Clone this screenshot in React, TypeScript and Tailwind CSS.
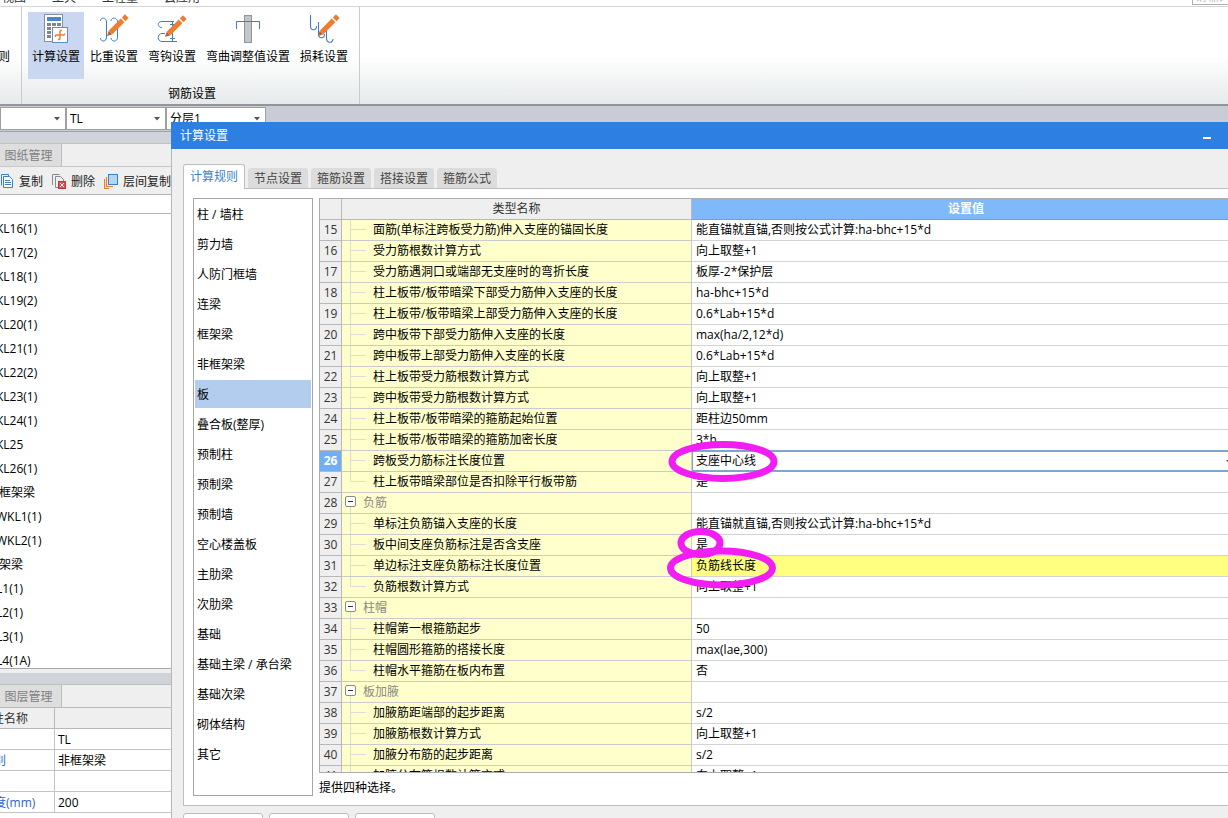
import React from "react";

const menus = ["视图", "工具", "工程量", "云应用"];

function Pencil({ x, y }: { x: number; y: number }) {
  return (
    <g transform={`translate(${x} ${y}) rotate(-45)`}>
      <path d="M0 0 L5 -2.6 V2.6 Z" fill="#b9622b" />
      <rect x="5" y="-2.6" width="17" height="5.2" fill="#ed7d31" />
      <rect x="23.5" y="-2.6" width="4.5" height="5.2" fill="#ed7d31" />
    </g>
  );
}

function CalcIcon() {
  return (
    <svg width="32" height="32" viewBox="0 0 32 32" aria-hidden="true">
      <rect x="4.5" y="1.5" width="18" height="27" fill="#fff" stroke="#8a9099" />
      <rect x="7" y="4" width="14" height="4" fill="#4a86c8" />
      {[10, 14, 18, 22].map((y) =>
        [7, 12, 17].map((x) => <rect key={`${x}-${y}`} x={x} y={y} width="4" height="3" fill="#7f868e" />)
      )}
      <rect x="12.5" y="14.5" width="15" height="15" fill="#fff" stroke="#5b8fc9" />
      <path
        d="M20 17.500V26.500M15.500 22H24.500M20 17.500H22M18 26.500H20M15.500 22V24M24.500 20.500V22"
        fill="none"
        stroke="#ed7d31"
        strokeWidth="1.4"
      />
    </svg>
  );
}

function WeightIcon() {
  return (
    <svg width="32" height="32" viewBox="0 0 32 32" aria-hidden="true">
      <g fill="none" stroke="#3f7fc1">
        <path d="M2.5 8C2.5 4 8.5 4 8.5 9V24C8.500 29.500 2.500 29 2.500 25" />
        <path d="M13 8C13 4 19.500 4 19.500 9V24C19.500 29.500 13 29 13 25" />
      </g>
      <Pencil x={9} y={23} />
    </svg>
  );
}

function HookIcon() {
  return (
    <svg width="32" height="32" viewBox="0 0 32 32" aria-hidden="true">
      <g fill="none" stroke="#3f7fc1">
        <path d="M6 14.500C1 14.500 1 8.500 6 8.500H18" />
        <path d="M9 20.500H6C1 20.500 1 28.500 6 28.500H21" />
        <path d="M16.500 8.500V28.500M14 11.500H19M14 25.500H19" />
      </g>
      <Pencil x={9} y={24} />
    </svg>
  );
}

function BendIcon() {
  return (
    <svg width="32" height="32" viewBox="0 0 32 32" aria-hidden="true">
      <rect x="12.5" y="2.5" width="7" height="27" fill="#c3c7cb" stroke="#8f9499" />
      <path d="M4.500 16V8.500H27.500V16" fill="none" stroke="#3f7fc1" />
    </svg>
  );
}

function LossIcon() {
  return (
    <svg width="32" height="32" viewBox="0 0 32 32" aria-hidden="true">
      <g fill="none" stroke="#3f7fc1" strokeWidth="1.100">
        <path d="M2.500 2V13C2.500 18 8.500 18 8.500 13" />
        <path d="M10.500 9V21C10.500 26 16.500 26 16.500 21" />
        <path d="M18.500 17V25C18.500 30.500 25 30.500 25 26" />
      </g>
      <Pencil x={10} y={23} />
    </svg>
  );
}

const ribbon = [
  { label: "计算设置", Icon: CalcIcon, active: true },
  { label: "比重设置", Icon: WeightIcon },
  { label: "弯钩设置", Icon: HookIcon },
  { label: "弯曲调整值设置", Icon: BendIcon },
  { label: "损耗设置", Icon: LossIcon },
];

function Combo({ label, value, className }: { label: string; value: string; className: string }) {
  return (
    <div className={`relative h-[23px] shrink-0 border border-[#a0a0a0] bg-white ${className}`}>
      <select
        aria-label={label}
        defaultValue={value}
        className="block h-full w-full appearance-none bg-transparent pl-[3px] text-black outline-none"
      >
        <option>{value}</option>
      </select>
      <svg className="pointer-events-none absolute top-[9px] right-[5px]" width="6" height="4" viewBox="0 0 6 4">
        <path d="M0 0H6L3 3.500Z" fill="#555" />
      </svg>
    </div>
  );
}

function CopyIcon() {
  return (
    <svg width="14" height="15" viewBox="0 0 14 15" fill="#fff" stroke="#3f7fc1" aria-hidden="true">
      <path d="M1.500 11.500V0.500H8.500V3" fill="none" />
      <path d="M3.500 2.500H9.500L12.500 5.500V13.500H3.500Z" />
      <path d="M5 6.500H10M5 8.500H11M5 10.500H11" />
    </svg>
  );
}

function DeleteIcon() {
  return (
    <svg width="15" height="15" viewBox="0 0 15 15" fill="none" stroke="#858b91" aria-hidden="true">
      <path d="M0.500 11V0.500H7.500M3.500 13.500V2.500H8.500L11.500 5.500V7M3.500 13.500H6" />
      <rect x="6.500" y="7.500" width="7" height="7" fill="#d9534f" stroke="#c23b3b" />
      <path d="M8 9L12 13M12 9L8 13" stroke="#fff" />
    </svg>
  );
}

function FloorCopyIcon() {
  return (
    <svg width="15" height="15" viewBox="0 0 15 15" fill="none" aria-hidden="true">
      <path d="M0.500 5V14.500H5M2.500 3V12.500H9" stroke="#ed7d31" strokeWidth="1.200" />
      <rect x="4.500" y="0.500" width="9" height="10" fill="#b4d5fb" stroke="#3f7fc1" />
    </svg>
  );
}

const components = [
  "KL16(1)", "KL17(2)", "KL18(1)", "KL19(2)", "KL20(1)", "KL21(1)", "KL22(2)", "KL23(1)", "KL24(1)", "KL25",
  "KL26(1)", "框架梁", "WKL1(1)", "WKL2(1)", "架梁", "L1(1)", "L2(1)", "L3(1)", "L4(1A)",
];
const componentInset: Record<string, string> = {
  框架梁: "-ml-px",
  架梁: "-ml-px",
  "L1(1)": "-ml-1",
  "L2(1)": "-ml-1",
  "L3(1)": "-ml-1",
  "L4(1A)": "-ml-1",
};

const categories = [
  "柱 / 墙柱", "剪力墙", "人防门框墙", "连梁", "框架梁", "非框架梁", "板", "叠合板(整厚)", "预制柱", "预制梁",
  "预制墙", "空心楼盖板", "主肋梁", "次肋梁", "基础", "基础主梁 / 承台梁", "基础次梁", "砌体结构", "其它",
];

type Row = { n: number; name: string; value: string; kind?: "group" | "last" };
const rows: Row[] = [
  { n: 15, name: "面筋(单标注跨板受力筋)伸入支座的锚固长度", value: "能直锚就直锚,否则按公式计算:ha-bhc+15*d" },
  { n: 16, name: "受力筋根数计算方式", value: "向上取整+1" },
  { n: 17, name: "受力筋遇洞口或端部无支座时的弯折长度", value: "板厚-2*保护层" },
  { n: 18, name: "柱上板带/板带暗梁下部受力筋伸入支座的长度", value: "ha-bhc+15*d" },
  { n: 19, name: "柱上板带/板带暗梁上部受力筋伸入支座的长度", value: "0.6*Lab+15*d" },
  { n: 20, name: "跨中板带下部受力筋伸入支座的长度", value: "max(ha/2,12*d)" },
  { n: 21, name: "跨中板带上部受力筋伸入支座的长度", value: "0.6*Lab+15*d" },
  { n: 22, name: "柱上板带受力筋根数计算方式", value: "向上取整+1" },
  { n: 23, name: "跨中板带受力筋根数计算方式", value: "向上取整+1" },
  { n: 24, name: "柱上板带/板带暗梁的箍筋起始位置", value: "距柱边50mm" },
  { n: 25, name: "柱上板带/板带暗梁的箍筋加密长度", value: "3*h" },
  { n: 26, name: "跨板受力筋标注长度位置", value: "支座中心线" },
  { n: 27, name: "柱上板带暗梁部位是否扣除平行板带筋", value: "是", kind: "last" },
  { n: 28, name: "负筋", value: "", kind: "group" },
  { n: 29, name: "单标注负筋锚入支座的长度", value: "能直锚就直锚,否则按公式计算:ha-bhc+15*d" },
  { n: 30, name: "板中间支座负筋标注是否含支座", value: "是" },
  { n: 31, name: "单边标注支座负筋标注长度位置", value: "负筋线长度" },
  { n: 32, name: "负筋根数计算方式", value: "向上取整+1", kind: "last" },
  { n: 33, name: "柱帽", value: "", kind: "group" },
  { n: 34, name: "柱帽第一根箍筋起步", value: "50" },
  { n: 35, name: "柱帽圆形箍筋的搭接长度", value: "max(lae,300)" },
  { n: 36, name: "柱帽水平箍筋在板内布置", value: "否", kind: "last" },
  { n: 37, name: "板加腋", value: "", kind: "group" },
  { n: 38, name: "加腋筋距端部的起步距离", value: "s/2" },
  { n: 39, name: "加腋筋根数计算方式", value: "向上取整+1" },
  { n: 40, name: "加腋分布筋的起步距离", value: "s/2" },
  { n: 41, name: "加腋分布筋根数计算方式", value: "向上取整+1" },
];

function NameCell({ row }: { row: Row }) {
  if (row.kind === "group") {
    return (
      <div className="flex h-5 items-center text-[#8a8a7c]">
        <button type="button" aria-label={`折叠${row.name}`} className="h-5 w-[21px]">
          <svg width="21" height="20" viewBox="0 0 21 20">
            <path d="M8.500 14V20" stroke="#dcdcd8" />
            <rect x="3.500" y="3.500" width="10" height="10" rx="1.500" fill="#fff" stroke="#8c8c8c" />
            <path d="M6 8.500H11" stroke="#333" />
          </svg>
        </button>
        {row.name}
      </div>
    );
  }
  return (
    <div className="flex h-5 items-center">
      <svg width="31" height="20" viewBox="0 0 31 20" className="shrink-0" aria-hidden="true">
        <path d={row.kind === "last" ? "M8.500 0V9.500H24" : "M8.500 0V20M8.500 9.500H24"} fill="none" stroke="#dcdcd8" />
      </svg>
      <span className="truncate">{row.name}</span>
    </div>
  );
}

function SettingsTable() {
  return (
    <table className="w-full table-fixed border-separate border-spacing-0">
      <colgroup>
        <col className="w-[22px]" />
        <col className="w-[350px]" />
        <col />
      </colgroup>
      <thead>
        <tr>
          <th className="h-[21px] border-r border-b border-[#b8b8b8] bg-[#efefef] p-0" />
          <th className="h-[21px] border-r border-b border-[#b8b8b8] bg-[#efefef] p-0 font-normal text-[#333]">
            类型名称
          </th>
          <th className="h-[21px] border-b border-[#7f9fc0] bg-[#80b9f9] p-0 pl-3 font-bold text-white">设置值</th>
        </tr>
      </thead>
      <tbody>
        {rows.map((r) => (
          <tr key={r.n}>
            <td
              className={`h-[21px] border-r border-b border-[#b8b8b8] p-0 text-center ${
                r.n === 26 ? "bg-[#6fb0f5] font-bold text-white" : "bg-[#efefef] text-[#333]"
              }`}
            >
              {r.n}
            </td>
            <td className="h-[21px] border-r border-b border-[#cbcbcb] bg-[#ffffcc] p-0">
              <NameCell row={r} />
            </td>
            {r.n === 26 ? (
              <td className="h-[21px] border-b border-[#7ba7cc] p-0">
                <div className="relative h-5 border-y border-l border-[#7ba7cc] bg-white">
                  <select
                    aria-label={r.name}
                    defaultValue={r.value}
                    className="block h-full w-full appearance-none bg-transparent pl-[3px] outline-none"
                  >
                    <option>{r.value}</option>
                  </select>
                  <svg className="pointer-events-none absolute top-2 -right-1" width="6" height="4" viewBox="0 0 6 4">
                    <path d="M0 0H6L3 3.500Z" fill="#555" />
                  </svg>
                </div>
              </td>
            ) : (
              <td
                className={`h-[21px] border-b p-0 pl-1 ${r.n === 25 ? "border-[#7ba7cc]" : "border-[#d3d3d3]"} ${
                  r.n === 31 ? "bg-[#ffff80]" : "bg-white"
                }`}
              >
                {r.value}
              </td>
            )}
          </tr>
        ))}
      </tbody>
    </table>
  );
}

function LeftPane() {
  return (
    <div className="flex min-h-0 w-[172px] flex-1 flex-col overflow-hidden bg-[#efefef]">
      <div className="h-3 shrink-0 border-b border-[#c0c0c0] bg-[#d0d3d8]" />
      <div className="flex h-[23px] shrink-0 border-b border-[#c8c8c8]">
        <button type="button" className="w-[62px] border-r border-[#bdbdbd] bg-[#dedede] pt-0.5 pr-1 text-[#808080]">
          图纸管理
        </button>
      </div>
      <div className="flex h-7 shrink-0 items-center border-b border-[#b5b5b5] pt-0.5 whitespace-nowrap text-[#222]">
        <button type="button" className="flex shrink-0 items-center gap-[5px] pr-[9px]">
          <CopyIcon />
          复制
        </button>
        <button type="button" className="flex shrink-0 items-center gap-1 pr-[9px]">
          <DeleteIcon />
          删除
        </button>
        <button type="button" className="flex shrink-0 items-center gap-1">
          <FloorCopyIcon />
          层间复制
        </button>
      </div>
      <input aria-label="搜索构件" className="h-[19px] shrink-0 border-b border-[#b5b5b5] bg-white outline-none" />
      <ul className="min-h-0 flex-1 overflow-hidden border-b border-[#a8a8a8] bg-white pt-[3px]">
        {components.map((c) => (
          <li key={c} className={`h-6 leading-6 whitespace-nowrap ${componentInset[c] ?? "-ml-1"}`}>
            {c}
          </li>
        ))}
      </ul>
      <div className="mt-1 h-3 shrink-0 border-b border-[#c0c0c0] bg-[#d0d3d8]" />
      <div className="flex h-[23px] shrink-0 border-b border-[#b8b8b8]">
        <button type="button" className="w-[62px] border-r border-[#bdbdbd] bg-[#dedede] pt-0.5 pr-1 text-[#808080]">
          图层管理
        </button>
      </div>
      <table className="w-full shrink-0 table-fixed border-separate border-spacing-0 bg-white whitespace-nowrap">
        <colgroup>
          <col className="w-[55px]" />
          <col />
        </colgroup>
        <thead>
          <tr>
            <th className="h-[21px] border-r border-b border-[#b8b8b8] bg-[#efefef] p-0 pt-0.5 text-left font-normal text-[#333]">
              <span className="-ml-2">性名称</span>
            </th>
            <th className="h-[21px] border-b border-[#b8b8b8] bg-[#efefef] p-0" />
          </tr>
        </thead>
        <tbody>
          {[
            ["", "TL"],
            ["别", "非框架梁"],
            ["", ""],
            ["度(mm)", "200"],
          ].map(([k, v], i) => (
            <tr key={i}>
              <td className="h-[21px] border-r border-b border-[#c4c4c4] p-0 pt-0.5 text-[#2f62d0]">
                <span className="-ml-1.5">{k}</span>
              </td>
              <td className="h-[21px] border-b border-[#c4c4c4] p-0 pt-0.5 pl-[3px]">{v}</td>
            </tr>
          ))}
        </tbody>
      </table>
      <div className="h-[5px] shrink-0 bg-white" />
    </div>
  );
}

function Dialog() {
  return (
    <section aria-label="计算设置" className="absolute top-[122px] right-0 bottom-0 left-[171px] flex flex-col">
      <header className="flex h-[27px] shrink-0 items-center justify-between bg-[#2d7fe2] pr-[17px] pl-[9px] text-white">
        <h1>计算设置</h1>
        <button type="button" aria-label="最小化" className="flex h-full w-2 items-center pt-1">
          <span className="block h-0.5 w-2 bg-white" />
        </button>
      </header>
      <div className="flex min-h-0 flex-1 flex-col border-l border-[#b4b7bb] bg-[#efefef]">
        <div className="flex h-[39px] shrink-0 items-end gap-[3px] pl-[11px]">
          <button
            type="button"
            className="relative z-10 -mb-px h-[25px] w-[62px] rounded-t-[3px] border border-b-0 border-[#bfbfbf] bg-white text-[#3a7fd0]"
          >
            计算规则
          </button>
          {["节点设置", "箍筋设置", "搭接设置", "箍筋公式"].map((t) => (
            <button key={t} type="button" className="h-5 w-[60px] rounded-t-[3px] bg-[#dcdcdc] pt-0.5 text-[#444]">
              {t}
            </button>
          ))}
        </div>
        <div className="ml-[11px] flex min-h-0 flex-1 gap-[6px] border border-r-0 border-[#bfbfbf] bg-white py-[9px] pl-[9px]">
          <nav className="w-[120px] shrink-0 overflow-hidden border border-[#a5a5a5] px-px">
            {categories.map((c) => (
              <button
                key={c}
                type="button"
                className={`block h-[30px] w-full border-y border-white pt-0.5 pl-0.5 text-left ${
                  c === "板" ? "bg-[#b2cdee]" : "bg-white"
                }`}
              >
                {c}
              </button>
            ))}
          </nav>
          <div className="flex min-w-0 flex-1 flex-col">
            <div className="min-h-0 flex-1 overflow-hidden border border-r-0 border-[#a9adb1]">
              <SettingsTable />
            </div>
            <p className="flex h-[23px] shrink-0 items-center pt-[7px]">提供四种选择。</p>
          </div>
        </div>
        <footer className="flex h-3 shrink-0 gap-1.5 overflow-hidden pt-[7px] pl-[11px]">
          {["导入规则", "导出规则", "恢复默认"].map((b) => (
            <button
              key={b}
              type="button"
              aria-label={b}
              className="h-6 w-20 shrink-0 rounded-[3px] border border-[#bdbdbd] bg-white"
            />
          ))}
        </footer>
      </div>
    </section>
  );
}

export default function App() {
  return (
    <main className="relative flex h-screen flex-col overflow-hidden bg-[#c9ccd4] font-['Open_Sans','Noto_Sans_CJK_SC',sans-serif] text-[12px] leading-4 text-black">
      <div className="flex h-[7px] shrink-0 items-end justify-between overflow-hidden border-b border-[#d5d5d5] bg-white">
        <nav className="flex gap-[26px] pl-0.5">
          {menus.map((m) => (
            <a key={m} href="#" className="block h-4 text-[#333]">
              {m}
            </a>
          ))}
        </nav>
        <input
          aria-label="搜索"
          placeholder="请输入"
          className="mb-px h-[18px] w-9 border border-r-0 border-[#b0b0b0] bg-white pl-0.5 outline-none placeholder:text-[#bbb]"
        />
      </div>
      <div className="flex h-[99px] shrink-0 border-b-2 border-[#92969a] bg-linear-to-b from-white from-50% to-[#e6eaea]">
        <div className="flex w-[22px] shrink-0 flex-col border-r border-[#c8cccc] pt-[42px]">
          <span className="-ml-0.5">则</span>
        </div>
        <div className="flex flex-col items-center border-r border-[#c8cccc] pt-[5px] pr-[7px] pl-1.5">
          <div className="flex gap-0.5">
            {ribbon.map(({ label, Icon, active }) => (
              <button
                key={label}
                type="button"
                className={`flex h-[67px] flex-col items-center gap-1 px-1 pt-px ${active ? "bg-[#c9d8f0]" : ""}`}
              >
                <Icon />
                {label}
              </button>
            ))}
          </div>
          <div className="pt-[7px] pl-1">钢筋设置</div>
        </div>
      </div>
      <div className="flex h-[26px] shrink-0 items-start border-b border-[#9fa3a8] pt-px">
        <Combo label="构件类型" value="" className="w-[66px]" />
        <Combo label="构件" value="TL" className="w-[100px]" />
        <Combo label="分层" value="分层1" className="w-[100px]" />
      </div>
      <LeftPane />
      <Dialog />
      <svg
        className="pointer-events-none absolute top-[436px] left-[660px]"
        width="124"
        height="158"
        viewBox="660 436 124 158"
        fill="none"
        stroke="#f21df2"
        strokeWidth="7"
        aria-hidden="true"
      >
        <ellipse cx="723" cy="461.500" rx="51" ry="17" />
        <ellipse cx="700.500" cy="543" rx="19.500" ry="11.500" />
        <ellipse cx="721.500" cy="568" rx="51" ry="17" />
      </svg>
    </main>
  );
}
